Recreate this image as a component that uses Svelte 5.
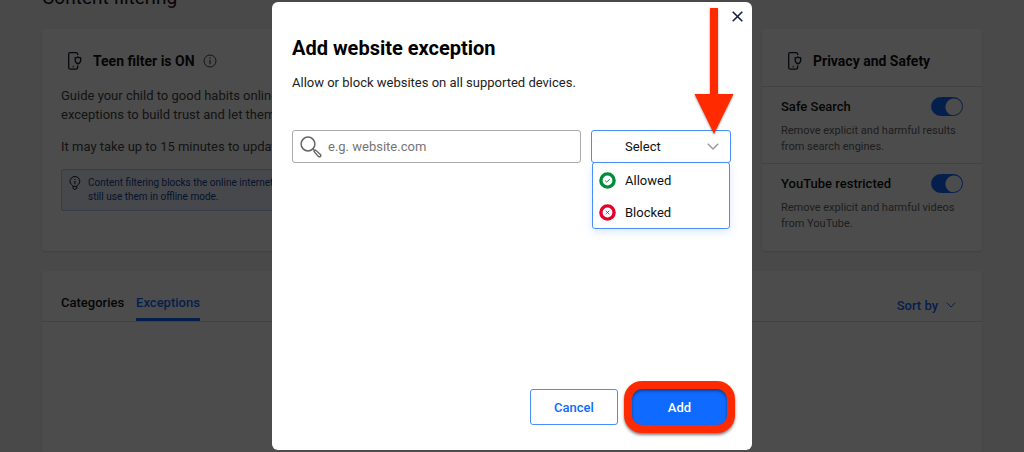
<script lang="ts">
  let website = $state("");
  let rule = $state("");
  let menuOpen = $state(true);
  let dialogOpen = $state(true);
  let activeTab = $state("Exceptions");

  const tabs = ["Categories", "Exceptions"];

  let settings = $state([
    {
      id: "safe-search",
      title: "Safe Search",
      text: "Remove explicit and harmful results from search engines.",
      on: true,
    },
    {
      id: "youtube",
      title: "YouTube restricted",
      text: "Remove explicit and harmful videos from YouTube.",
      on: true,
    },
  ]);

  const choose = (value: string) => {
    rule = value;
    menuOpen = false;
  };
</script>

{#snippet deviceIcon()}
  <svg class="device" width="14" height="18" viewBox="0 0 14 18" fill="none" stroke="#14182c" stroke-width="1.3">
    <path d="M9.6 3V2.2Q9.6 .7 8.1 .7H2.2Q.7 .7 .7 2.2V15.6Q.7 17.1 2.2 17.1H8.1Q9.6 17.1 9.6 15.6V13.6" />
    <path d="M7.2 5.8Q9 5.6 9.9 4.9Q10.8 5.6 12.7 5.8V8.3Q12.7 10.8 9.9 11.9Q7.2 10.8 7.2 8.3Z" />
    <path d="M4.6 14.6H5.8" />
  </svg>
{/snippet}

<div class="page">
  <h1>Content filtering</h1>

  <div class="cards">
    <section class="card filter">
      <h2>
        {@render deviceIcon()}
        Teen filter is ON
        <svg class="info" width="14" height="14" viewBox="0 0 14 14" fill="none" stroke="#444">
          <circle cx="7" cy="7" r="6" />
          <path d="M7 6V10.3M7 3.6V4.8" stroke-width="1.2" />
        </svg>
      </h2>
      <p>Guide your child to good habits online.<br />exceptions to build trust and let them</p>
      <p>It may take up to 15 minutes to update</p>
      <div class="note">
        <svg width="12" height="15" viewBox="0 0 12 15" fill="none" stroke="#14182c">
          <path d="M4 10.4C3.7 9 1 8 1 5.4A4.9 4.9 0 0 1 10.8 5.4C10.8 8 8.1 9 7.8 10.4ZM4 10.4V12.4Q5.9 14.6 7.8 12.4V10.4M5.9 5V8.2M5.9 3V4" />
        </svg>
        <span>Content filtering blocks the online internet<br />still use them in offline mode.</span>
      </div>
    </section>

    <section class="card privacy">
      <h2>
        {@render deviceIcon()}
        Privacy and Safety
      </h2>
      {#each settings as setting (setting.id)}
        <div class="setting">
          <div class="settingHead">
            <label for={setting.id}>{setting.title}</label>
            <input type="checkbox" id={setting.id} bind:checked={setting.on} />
          </div>
          <p>{setting.text}</p>
        </div>
      {/each}
    </section>
  </div>

  <section class="card list">
    <div class="tabs">
      {#each tabs as tab}
        <button class="tab" class:active={tab === activeTab} onclick={() => (activeTab = tab)}>{tab}</button>
      {/each}
      <button class="sort">
        Sort by
        <svg width="10" height="6" viewBox="0 0 10 6" fill="none" stroke="currentColor">
          <path d="M.7 .7L5 5L9.3 .7" />
        </svg>
      </button>
    </div>
  </section>
</div>

{#if dialogOpen}
  <div class="overlay">
    <div class="dialog" role="dialog" aria-modal="true" aria-labelledby="dialog-title">
      <button class="close" aria-label="Close" onclick={() => (dialogOpen = false)}>
        <svg width="11" height="11" viewBox="0 0 11 11" fill="none" stroke="#14213f" stroke-width="1.6">
          <path d="M.7 .7L10.3 10.3M10.3 .7L.7 10.3" />
        </svg>
      </button>

      <h2 id="dialog-title">Add website exception</h2>
      <p>Allow or block websites on all supported devices.</p>

      <div class="fields">
        <div class="search">
          <svg width="22" height="22" viewBox="0 0 22 22" fill="none" stroke="#666">
            <circle cx="8" cy="8" r="6.9" stroke-width="1.5" />
            <path d="M12.9 12.9L14.8 14.8" stroke-width="1.5" />
            <path d="M14.1 15.6L15.6 14.1L20.4 18.4Q21.3 19.5 20.4 20.4Q19.5 21.3 18.4 20.4Z" stroke-width="1.4" />
          </svg>
          <input type="text" aria-label="Website" placeholder="e.g. website.com" bind:value={website} />
        </div>

        <div class="rule">
          <select
            aria-label="Rule"
            bind:value={rule}
            onmousedown={(e) => {
              e.preventDefault();
              menuOpen = !menuOpen;
            }}
          >
            <option value="">Select</option>
            <option value="allowed">Allowed</option>
            <option value="blocked">Blocked</option>
          </select>
          <svg class="chevron" width="12" height="7" viewBox="0 0 12 7" fill="none" stroke="#999" stroke-width="1.4">
            <path d="M.8 .8L6 6L11.2 .8" />
          </svg>

          {#if menuOpen}
            <div class="menu">
              <button onclick={() => choose("allowed")}>
                <svg width="17" height="17" viewBox="0 0 17 17" fill="none">
                  <circle cx="8.5" cy="8.5" r="6.6" stroke="#008a3a" stroke-width="3.4" />
                  <path d="M6.2 8.7L7.7 10L10.8 7.2" stroke="#008a3a" stroke-width=".9" />
                </svg>
                Allowed
              </button>
              <button onclick={() => choose("blocked")}>
                <svg width="17" height="17" viewBox="0 0 17 17" fill="none">
                  <circle cx="8.5" cy="8.5" r="6.6" stroke="#e4002b" stroke-width="3.4" />
                  <path d="M6.7 6.7L10.3 10.3M10.3 6.7L6.7 10.3" stroke="#e4002b" stroke-width=".8" />
                </svg>
                Blocked
              </button>
            </div>
          {/if}

          <svg class="arrow" width="40" height="126" viewBox="0 0 40 126">
            <path d="M16 0H24V86H39.5L20 126L.5 86H16Z" fill="#ff2a00" />
          </svg>
        </div>
      </div>

      <div class="actions">
        <button class="cancel" onclick={() => (dialogOpen = false)}>Cancel</button>
        <button class="add">Add</button>
      </div>
    </div>
  </div>
{/if}

<style>
  :global(body) {
    font-family: Roboto, "Liberation Sans", sans-serif;
    color: #111;
  }

  h1,
  h2,
  p {
    margin: 0;
  }

  button,
  input,
  select {
    font-family: inherit;
    margin: 0;
  }

  button {
    padding: 0;
    border: none;
    background: none;
    cursor: pointer;
  }

  .page {
    height: 100vh;
    overflow: hidden;
    box-sizing: border-box;
    padding: 0 42px;
    display: flex;
    flex-direction: column;
    background: #f4f4f4;
  }

  /* scrolled partly out of view */
  h1 {
    margin-top: -14px;
    margin-bottom: 19px;
    font-size: 19px;
    line-height: 24px;
    font-weight: 400;
  }

  .cards {
    display: flex;
    gap: 20px;
    margin-bottom: 20px;
  }

  .card {
    background: #fff;
    border-radius: 3px;
    box-shadow: 0 1px 2px rgba(0, 0, 0, 0.12);
  }

  .card h2 {
    display: flex;
    align-items: center;
    font-size: 14px;
    line-height: 20px;
    font-weight: 700;
  }

  .device {
    margin-right: 11px;
  }

  .info {
    margin-left: 8px;
  }

  .filter {
    flex: 1;
    min-width: 0;
    box-sizing: border-box;
    height: 222px;
    padding: 22px 19px;
    white-space: nowrap;
    overflow: hidden;
  }

  .filter h2 {
    padding-left: 7px;
    margin-bottom: 15px;
  }

  .filter p {
    font-size: 13px;
    line-height: 19px;
    margin-bottom: 13px;
    color: #444;
  }

  .note {
    display: flex;
    gap: 7px;
    padding: 6px 7px;
    border: 1px solid #b9d0f8;
    border-radius: 2px;
    background: #e9f1ff;
    font-size: 10px;
    line-height: 14px;
    color: #16448f;
  }

  .privacy {
    width: 220px;
  }

  .privacy h2 {
    padding: 22px 26px 15px;
  }

  .setting {
    padding: 10px 19px 8px;
    border-top: 1px solid #ddd;
  }

  .settingHead {
    display: flex;
    align-items: center;
    justify-content: space-between;
    margin-bottom: 7px;
  }

  .settingHead label {
    font-size: 13px;
    font-weight: 500;
  }

  .settingHead input {
    appearance: none;
    width: 32px;
    height: 19px;
    border-radius: 10px;
    border: 1px solid #0f6aff;
    background: radial-gradient(circle at 22px 9px, #fff 8px, #0f6aff 9px);
  }

  .settingHead input:not(:checked) {
    border-color: #999;
    background: radial-gradient(circle at 8px 9px, #fff 8px, #999 9px);
  }

  .setting p {
    font-size: 11px;
    line-height: 16px;
    color: #666;
  }

  .list {
    flex: 1;
  }

  .tabs {
    display: flex;
    gap: 12px;
    height: 50px;
    padding: 0 26px 0 19px;
    border-bottom: 1px solid #ddd;
  }

  .tab {
    padding-top: 16px;
    border-bottom: 3px solid transparent;
    font-size: 13px;
    font-weight: 500;
    color: #111;
  }

  .tab.active {
    color: #0f6aff;
    border-color: #0f6aff;
  }

  .sort {
    display: flex;
    align-items: center;
    gap: 8px;
    margin-left: auto;
    padding-top: 18px;
    font-size: 13px;
    font-weight: 500;
    color: #0f6aff;
  }

  .overlay {
    position: fixed;
    inset: 0;
    display: flex;
    justify-content: center;
    padding: 2px 0;
    background: rgba(0, 0, 0, 0.7);
  }

  .dialog {
    position: relative;
    width: 480px;
    box-sizing: border-box;
    padding: 32px 21px 25px 20px;
    display: flex;
    flex-direction: column;
    border-radius: 6px;
    background: #fff;
  }

  .close {
    position: absolute;
    top: 9px;
    right: 9px;
    display: flex;
  }

  .dialog h2 {
    font-size: 20px;
    line-height: 28px;
    font-weight: 700;
    color: #000;
  }

  .dialog p {
    margin-top: 11px;
    margin-bottom: 37px;
    font-size: 13px;
    line-height: 20px;
    color: #222;
  }

  .fields {
    display: flex;
    gap: 10px;
  }

  .search {
    flex: 1;
    display: flex;
    align-items: center;
    gap: 6px;
    height: 31px;
    padding: 0 7px;
    border: 1px solid #aaa;
    border-radius: 3px;
  }

  .search input {
    flex: 1;
    min-width: 0;
    padding: 0;
    border: none;
    outline: none;
    background: none;
    font-size: 13px;
    color: #111;
  }

  .search input::placeholder {
    color: #757575;
  }

  .rule {
    position: relative;
    width: 140px;
  }

  .rule select {
    appearance: none;
    width: 100%;
    height: 33px;
    padding: 0 33px;
    border: 1px solid #4a8dff;
    border-radius: 3px;
    background: #fff;
    font-size: 13px;
    color: #111;
  }

  .chevron {
    position: absolute;
    top: 13px;
    right: 12px;
    pointer-events: none;
  }

  .menu {
    position: absolute;
    top: 32px;
    left: 1px;
    right: 1px;
    padding-top: 1px;
    border: 1px solid #4a8dff;
    border-radius: 3px;
    background: #fff;
    box-shadow: 0 3px 8px rgba(15, 106, 255, 0.15);
  }

  .menu button {
    display: flex;
    align-items: center;
    gap: 9px;
    width: 100%;
    height: 32px;
    padding: 0 6px;
    font-size: 13px;
    color: #111;
  }

  .arrow {
    position: absolute;
    right: -3px;
    bottom: 29px;
    pointer-events: none;
    filter: drop-shadow(0 1px 1px rgba(0, 0, 0, 0.4));
  }

  .actions {
    display: flex;
    justify-content: flex-end;
    gap: 14px;
    margin-top: auto;
    padding-right: 4px;
  }

  .actions button {
    height: 36px;
    font-size: 13px;
    font-weight: 500;
  }

  .cancel {
    width: 88px;
    border: 1px solid #4a8dff;
    border-radius: 3px;
    color: #0f6aff;
  }

  .actions .add {
    width: 95px;
    border-radius: 10px;
    background: #0f6aff;
    color: #fff;
    box-shadow:
      0 0 0 8px #ff2a00,
      0 2px 3px 8px rgba(0, 0, 0, 0.5),
      inset 0 2px 3px rgba(0, 0, 0, 0.4);
  }
</style>
